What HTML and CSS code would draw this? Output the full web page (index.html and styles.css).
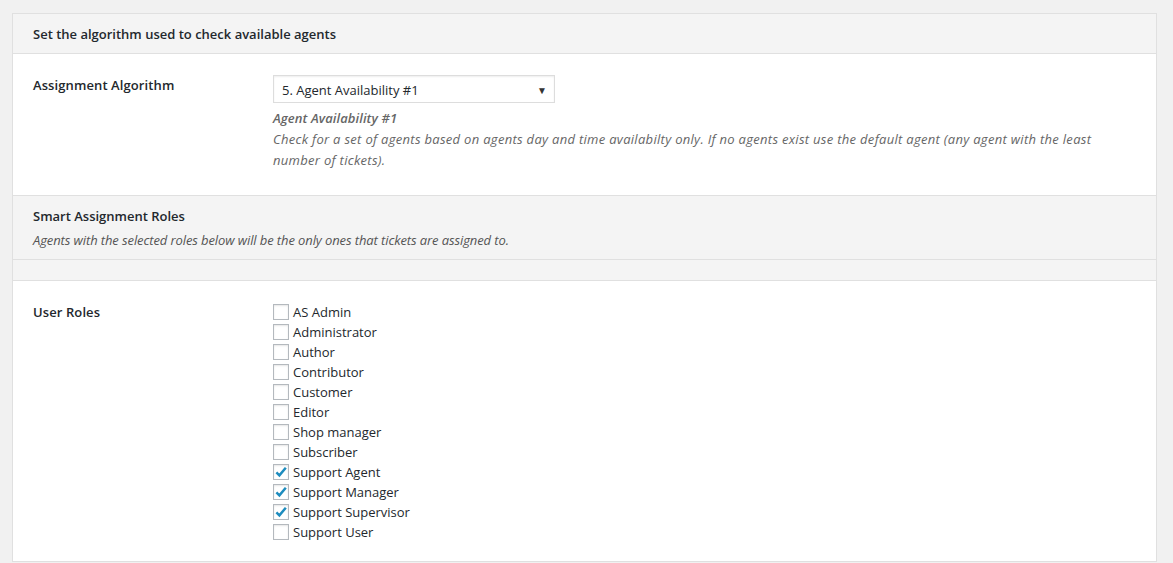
FILE: index.html
```html
<!DOCTYPE html>
<html>
<head>
<meta charset="utf-8">
<link rel="stylesheet" href="styles.css">
</head>
<body>
<div class="panel">
  <div class="panel-head">Set the algorithm used to check available agents</div>
  <div class="row row-algo">
    <div class="label">Assignment Algorithm</div>
    <div class="field">
      <div class="select">
        <span>5. Agent Availability #1</span>
        <span class="arrow">&#9660;</span>
      </div>
      <div class="desc">
        <div class="desc-title">Agent Availability #1</div>
        <div>Check for a set of agents based on agents day and time availabilty only. If no agents exist use the default agent (any agent with the least number of tickets).</div>
      </div>
    </div>
  </div>
  <div class="section-head">
    <div class="section-title">Smart Assignment Roles</div>
    <div class="section-desc">Agents with the selected roles below will be the only ones that tickets are assigned to.</div>
  </div>
  <div class="strip"></div>
  <div class="row row-roles">
    <div class="label">User Roles</div>
    <div class="field">
      <ul class="checks">
        <li><span class="box"></span>AS Admin</li>
        <li><span class="box"></span>Administrator</li>
        <li><span class="box"></span>Author</li>
        <li><span class="box"></span>Contributor</li>
        <li><span class="box"></span>Customer</li>
        <li><span class="box"></span>Editor</li>
        <li><span class="box"></span>Shop manager</li>
        <li><span class="box"></span>Subscriber</li>
        <li><span class="box checked"><svg viewBox="0 0 16 16" width="16" height="16"><path d="M3.4 8.4 L6.4 11.4 L12.8 3.8" fill="none" stroke="#1e8cbe" stroke-width="2.5" stroke-linejoin="miter"/></svg></span>Support Agent</li>
        <li><span class="box checked"><svg viewBox="0 0 16 16" width="16" height="16"><path d="M3.4 8.4 L6.4 11.4 L12.8 3.8" fill="none" stroke="#1e8cbe" stroke-width="2.5" stroke-linejoin="miter"/></svg></span>Support Manager</li>
        <li><span class="box checked"><svg viewBox="0 0 16 16" width="16" height="16"><path d="M3.4 8.4 L6.4 11.4 L12.8 3.8" fill="none" stroke="#1e8cbe" stroke-width="2.5" stroke-linejoin="miter"/></svg></span>Support Supervisor</li>
        <li><span class="box"></span>Support User</li>
      </ul>
    </div>
  </div>
</div>
</body>
</html>
```
FILE: styles.css
```css
* { box-sizing: border-box; }
html, body { margin: 0; padding: 0; }
body {
  background: #f1f1f1;
  font-family: "Open Sans", "Noto Sans", sans-serif;
  font-size: 13px;
  color: #23282d;
  padding: 13px 16px 0 12px;
}
.panel {
  background: #fff;
  border: 1px solid #e0e0e0;
}
.panel-head {
  background: #f4f4f4;
  border-bottom: 1px solid #e0e0e0;
  height: 40px;
  padding: 10px 20px 0 20px;
  line-height: 20px;
  font-weight: 600;
}
.row {
  display: flex;
  border-bottom: 1px solid #e0e0e0;
}
.row-algo { padding: 21px 20px 24px 20px; }
.row-roles { padding: 21px 20px 19px 20px; border-bottom: none; }
.label {
  width: 240px;
  flex: none;
  line-height: 20px;
  font-weight: 600;
  letter-spacing: 0.1px;
}
.field { flex: 1; }
.select {
  width: 282px;
  height: 28px;
  border: 1px solid #ddd;
  box-shadow: 0 1px 2px rgba(0,0,0,0.07) inset;
  display: flex;
  align-items: center;
  justify-content: space-between;
  padding: 1px 7px 0 8px;
  line-height: 20px;
  background: #fff;
}
.arrow { font-size: 10px; color: #333; }
.desc {
  margin-top: 5px;
  color: #666;
  font-style: italic;
  line-height: 21px;
  letter-spacing: 0.3px;
}
.desc-title { font-weight: 600; letter-spacing: 0.1px; }
.section-head {
  background: #f4f4f4;
  border-bottom: 1px solid #e0e0e0;
  padding: 10px 20px 9px 20px;
}
.section-title { line-height: 20px; font-weight: 600; }
.section-desc {
  margin-top: 4px;
  line-height: 20px;
  font-size: 13px;
  letter-spacing: -0.1px;
  font-style: italic;
  color: #555;
}
.strip {
  background: #f4f4f4;
  height: 21px;
  border-bottom: 1px solid #e0e0e0;
}
.checks { list-style: none; margin: 0; padding: 0; }
.checks li {
  display: flex;
  align-items: center;
  height: 20px;
  line-height: 20px;
}
.box {
  width: 16px;
  height: 16px;
  border: 1px solid #b4b9be;
  background: #fff;
  box-shadow: inset 0 1px 2px rgba(0,0,0,0.1);
  margin-right: 4px;
  flex: none;
  position: relative;
}
.box svg { position: absolute; left: -1px; top: -1px; }
```
